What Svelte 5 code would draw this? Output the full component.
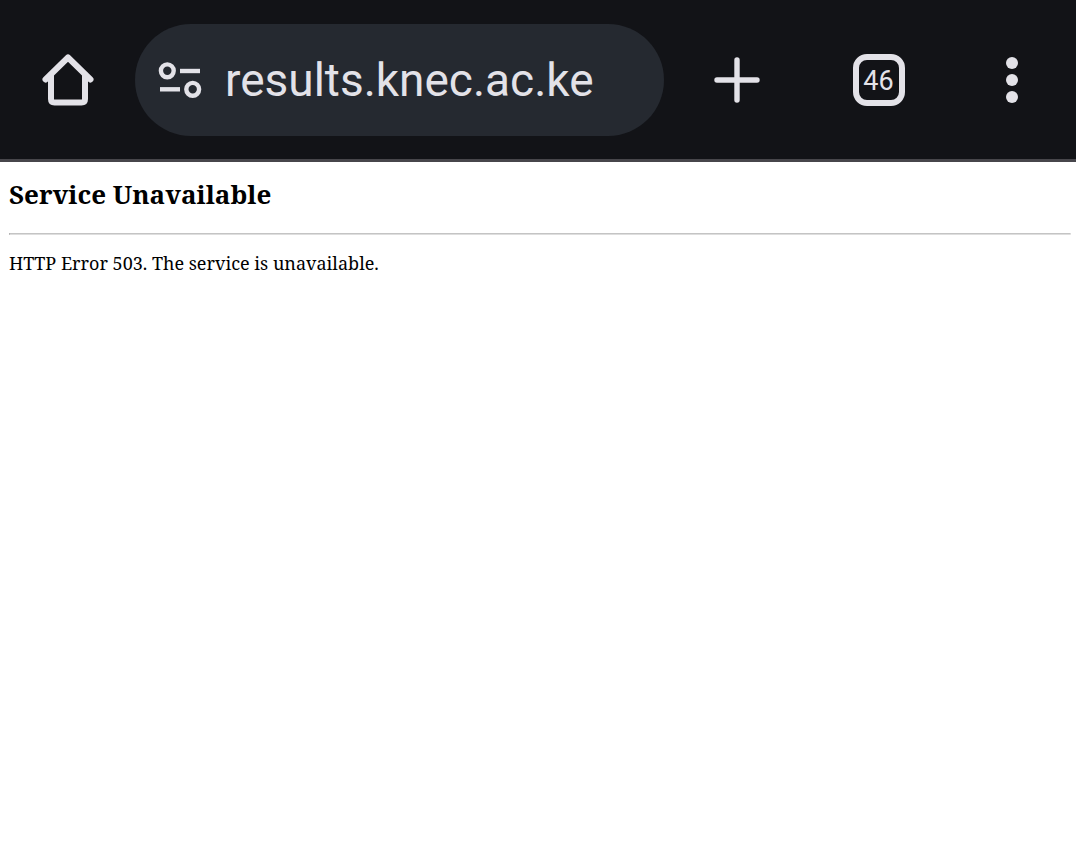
<script lang="ts">
  let url = $state('results.knec.ac.ke');
  let tabCount = $state(46);
</script>

<header class="toolbar">
  <button class="home" type="button" aria-label="Home">
    <svg width="56" height="56" viewBox="0 0 56 56">
      <path d="M5.5 27.5 28 5.5l22.5 22" />
      <path d="M11 23v24q0 3.5 3.5 3.5h27q3.5 0 3.5-3.5V23" />
    </svg>
  </button>

  <div class="address">
    <button class="site-info" type="button" aria-label="Site information">
      <svg width="44" height="40" viewBox="0 0 44 40">
        <circle cx="9.3" cy="10.8" r="6.4" />
        <path d="M22 11h20" />
        <circle cx="34.7" cy="29.3" r="6.4" />
        <path d="M2 29.3h20" />
      </svg>
    </button>
    <input type="text" aria-label="Address" spellcheck="false" bind:value={url} />
  </div>

  <button class="new-tab" type="button" aria-label="New tab">
    <svg width="48" height="48" viewBox="0 0 48 48">
      <path d="M24 4v40M4 24h40" />
    </svg>
  </button>
  <button class="tabs" type="button" aria-label="Open tabs">
    <span>{tabCount}</span>
  </button>
  <button class="menu" type="button" aria-label="More options">
    <svg width="12" height="48" viewBox="0 0 12 48">
      <circle cx="6" cy="7" r="6" />
      <circle cx="6" cy="24" r="6" />
      <circle cx="6" cy="41" r="6" />
    </svg>
  </button>
</header>

<main>
  <h2>Service Unavailable</h2>
  <hr />
  <p>HTTP Error 503. The service is unavailable.</p>
</main>

<style>
  :global(body) {
    margin: 0;
    background: #fff;
  }

  .toolbar {
    display: flex;
    align-items: center;
    padding: 24px 0 23px;
    background: #121317;
    border-bottom: 3px solid #47464b;
  }

  button {
    display: flex;
    flex: none;
    align-items: center;
    justify-content: center;
    height: 112px;
    padding: 0;
    border: 0;
    background: none;
    color: #e3e2e8;
    cursor: pointer;
  }

  svg {
    display: block;
    fill: none;
    stroke: currentColor;
    stroke-width: 6;
    stroke-linecap: round;
    stroke-linejoin: round;
  }

  .home {
    width: 135px;
  }

  .address {
    display: flex;
    flex: 1;
    align-items: center;
    min-width: 0;
    height: 112px;
    border-radius: 56px;
    background: #252930;
  }

  .site-info {
    width: 90px;
  }

  .site-info svg {
    stroke-width: 4.4;
    stroke-linecap: butt;
  }

  .address input {
    flex: 1;
    min-width: 0;
    height: 72px;
    margin-right: 24px;
    padding: 0;
    border: 0;
    outline: 0;
    background: none;
    color: #e3e2e8;
    font-family: Roboto, sans-serif;
    font-size: 46px;
  }

  .new-tab {
    width: 146px;
  }

  .new-tab svg {
    stroke-width: 5.4;
  }

  .tabs {
    width: 137px;
  }

  .tabs span {
    box-sizing: border-box;
    width: 52px;
    height: 52px;
    border: 6px solid currentColor;
    border-radius: 14px;
    font-family: Roboto, sans-serif;
    font-size: 27px;
    line-height: 42px;
    text-align: center;
  }

  .menu {
    width: 129px;
  }

  .menu svg {
    fill: currentColor;
    stroke: none;
  }

  main {
    padding: 14px 5px 16px 9px;
    color: #000;
    font-family: "Noto Serif", "Droid Serif", "Liberation Serif", serif;
  }

  h2 {
    margin: 0 0 21px;
    font-size: 26px;
    line-height: 36px;
  }

  hr {
    margin: 0 0 16px;
    border: 1px solid;
    border-color: #c4c4c4 #ededed #dedede #a0a0a0;
  }

  p {
    margin: 0;
    font-size: 18px;
    line-height: 24px;
  }
</style>
